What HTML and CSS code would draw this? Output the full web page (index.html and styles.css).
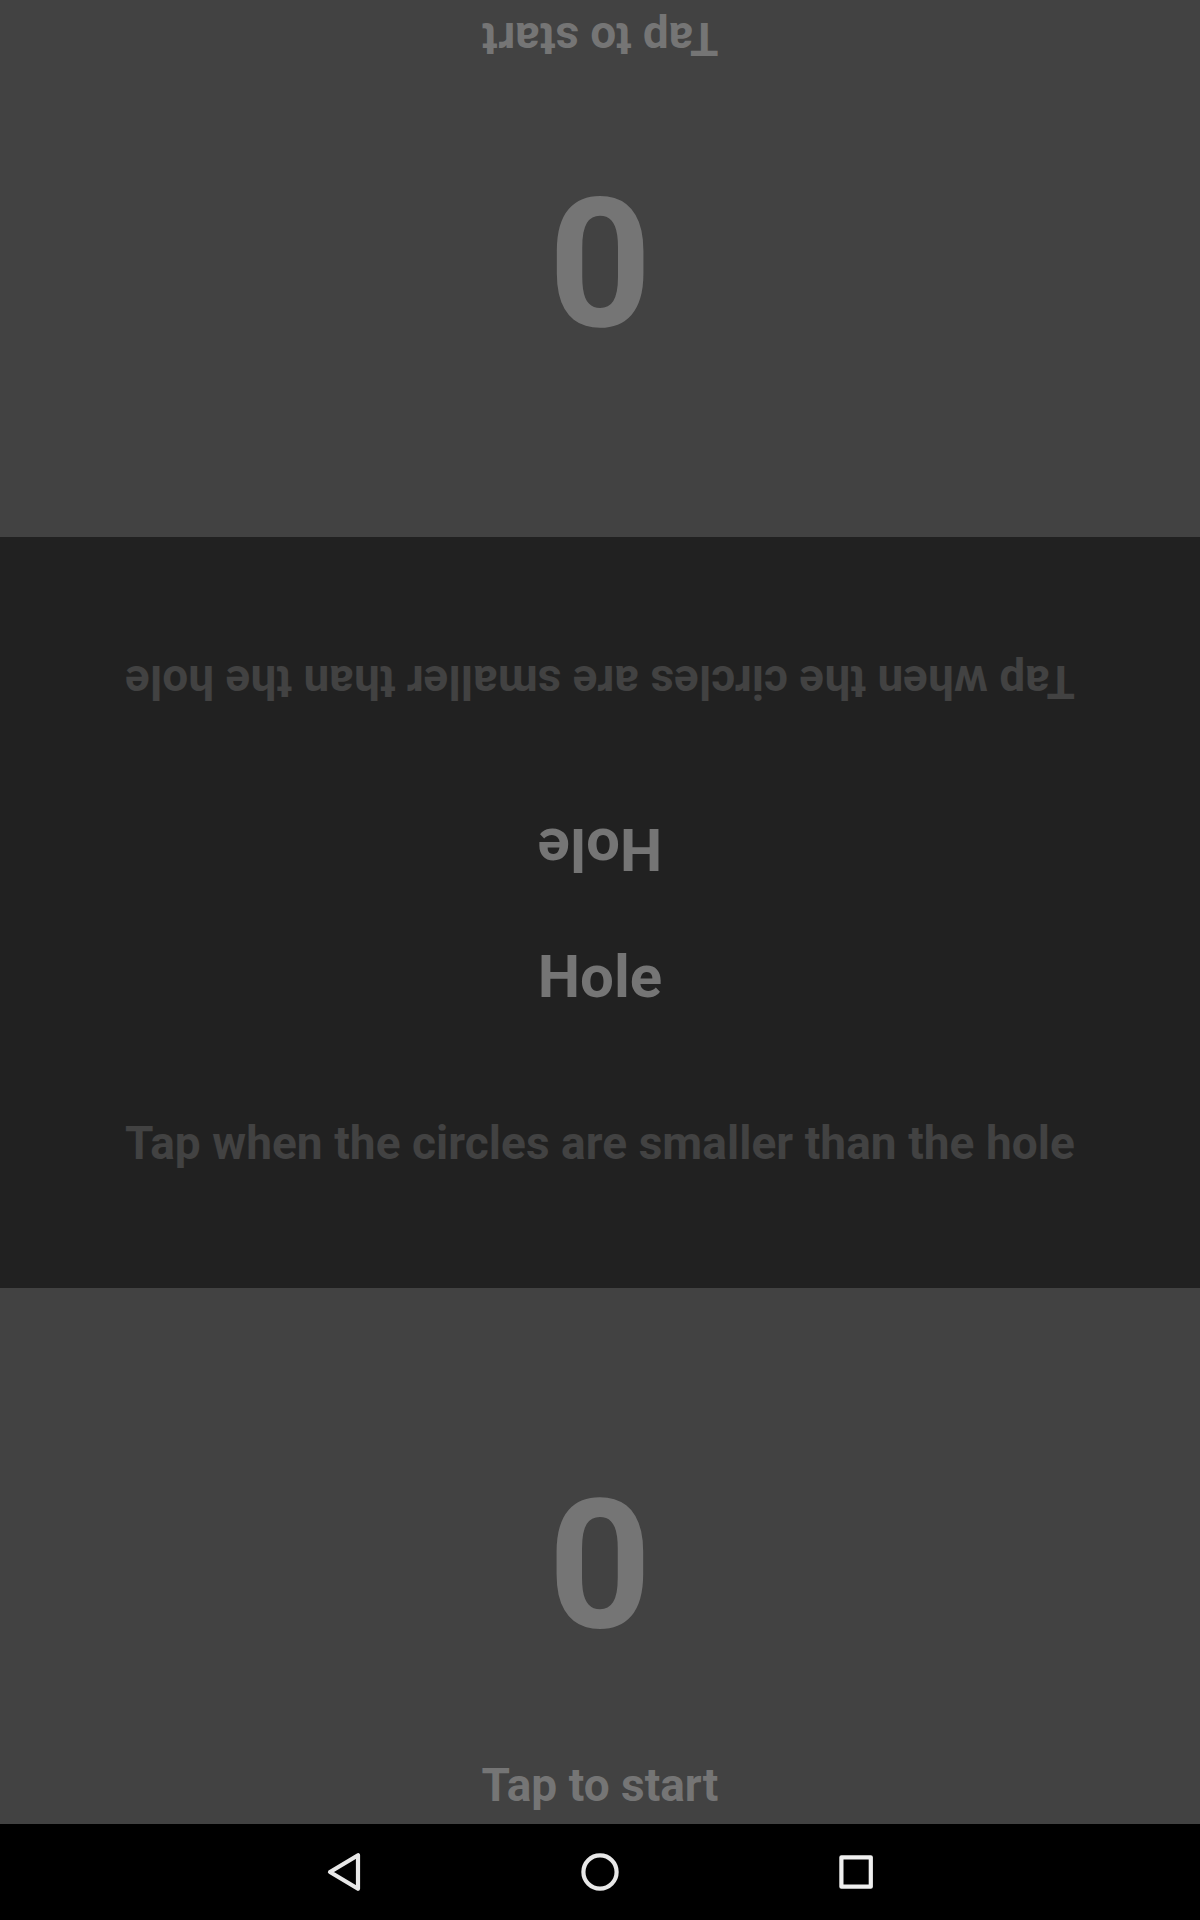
FILE: index.html
```html
<!DOCTYPE html>
<html lang="en">
<head>
<meta charset="utf-8">
<title>Hole</title>
<link rel="stylesheet" href="styles.css">
</head>
<body>
<main class="game">
  <section class="player player-top flipped">
    <div class="score">0</div>
    <div class="prompt">Tap to start</div>
  </section>
  <section class="board">
    <div class="half half-top flipped">
      <h2 class="title">Hole</h2>
      <p class="hint">Tap when the circles are smaller than the hole</p>
    </div>
    <div class="half">
      <h2 class="title">Hole</h2>
      <p class="hint">Tap when the circles are smaller than the hole</p>
    </div>
  </section>
  <section class="player">
    <div class="score">0</div>
    <div class="prompt">Tap to start</div>
  </section>
</main>
<nav class="navbar">
  <svg class="icon" viewBox="0 0 48 48"><path d="M38 7.2V40.8L10 24Z"/></svg>
  <svg class="icon" viewBox="0 0 48 48"><circle cx="24" cy="24" r="16.6"/></svg>
  <svg class="icon icon-square" viewBox="0 0 48 48"><rect x="9.4" y="9.3" width="29.4" height="29.4"/></svg>
</nav>
</body>
</html>
```
FILE: styles.css
```css
body {
  margin: 0;
  width: 1200px;
  height: 1920px;
  display: flex;
  flex-direction: column;
  background: #000;
  font-family: Roboto, sans-serif;
  font-weight: 700;
  color: #757575;
  text-align: center;
}
.game { height: 1824px; display: flex; flex-direction: column; }
.player {
  height: 536px;
  box-sizing: border-box;
  padding: 172px 0 12px;
  display: flex;
  flex-direction: column;
  justify-content: space-between;
  background: #424242;
}
.player-top { height: 537px; }
.board { height: 751px; background: #212121; }
.half { height: 375px; box-sizing: border-box; padding-top: 29px; }
.half-top { height: 376px; }
.flipped { transform: rotate(180deg); }
.score { font-size: 180px; line-height: 211px; }
.prompt { font-size: 46px; line-height: 54px; }
.title { margin: 0; font-size: 60px; line-height: 70px; }
.hint {
  margin: 104px 0 0;
  font-size: 46px;
  line-height: 54px;
  letter-spacing: 0.06px;
  color: #424242;
}
.half-top .hint { margin-top: 105px; }
.navbar {
  height: 96px;
  display: flex;
  align-items: center;
  justify-content: center;
  gap: 208px;
}
.icon {
  width: 48px;
  height: 48px;
  fill: none;
  stroke: #e8e8e8;
  stroke-width: 4.2;
  stroke-linejoin: round;
}
.icon-square { stroke: #f0f0f0; }
```
